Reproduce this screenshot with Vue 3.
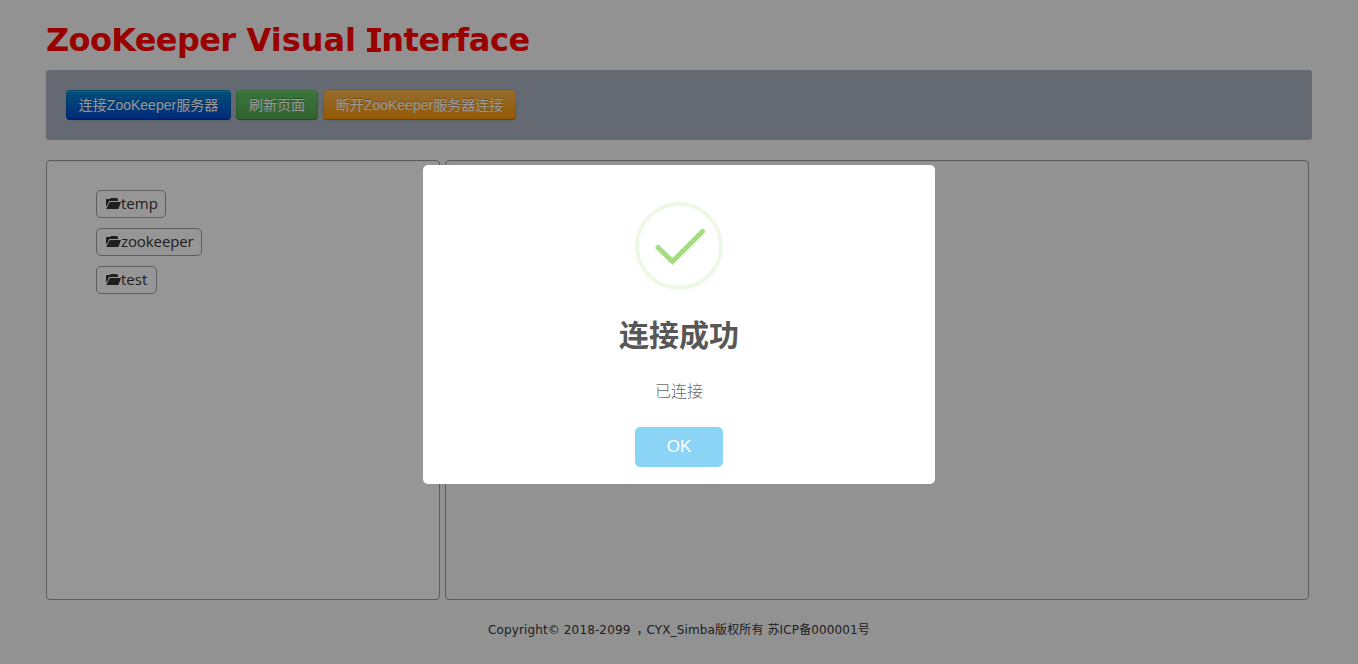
<script setup>
const nodes = ['temp', 'zookeeper', 'test']
</script>

<template>
  <div class="page">
    <h1><span class="brand">ZooKeeper</span> Visual <span class="cap">I</span><span class="rest">nterface</span></h1>
    <div class="toolbar">
      <button class="btn primary">连接ZooKeeper服务器</button>
      <button class="btn success">刷新页面</button>
      <button class="btn warning">断开ZooKeeper服务器连接</button>
    </div>
    <div class="panels">
      <ul class="tree">
        <li v-for="n in nodes" :key="n" :class="n">
          <svg width="16" height="14" viewBox="0 0 16 14">
            <path d="M1 9.5V2.6Q1 2 1.6 2H4.9L5.9 1H11.6L12.4 1.8H13V4H4.2L2.2 8.2Z" />
            <path d="M4.8 5H16L13.4 12H1.2Z" />
          </svg><span>{{ n }}</span>
        </li>
      </ul>
      <div class="detail"></div>
    </div>
    <footer>Copyright© 2018-2099 <span class="comma">，</span>CYX_Simba版权所有 苏ICP备000001号</footer>
  </div>
  <div class="overlay">
    <div class="modal">
      <svg class="ok-icon" width="88" height="88" viewBox="0 0 88 88">
        <circle cx="44" cy="44" r="42" fill="none" stroke="#edf8e7" stroke-width="4" />
        <path d="M23 45.5L37.5 59.5L67.5 29.5" fill="none" stroke="#a5dc86" stroke-width="5" stroke-linecap="round" />
      </svg>
      <h2>连接成功</h2>
      <p>已连接</p>
      <button class="confirm">OK</button>
    </div>
  </div>
</template>

<style>
body { background: #f3f3f3; overflow: hidden; }
</style>

<style scoped>
.page {
  box-sizing: border-box;
  height: 664px;
  padding: 20px 46px 0;
  font-family: "DejaVu Sans", "Noto Sans CJK SC", sans-serif;
  color: #333;
}
h1 {
  margin: 0 0 10px;
  height: 40px;
  font: bold 32px/40px "DejaVu Sans", sans-serif;
  color: #f00;
  white-space: nowrap;
}
.brand { letter-spacing: -.65px; }
.rest { letter-spacing: -.4px; }
.cap {
  position: relative;
  display: inline-block;
  width: 14px;
  text-align: center;
}
.cap::before, .cap::after {
  content: "";
  position: absolute;
  left: 0;
  width: 14px;
  height: 4px;
  background: #f00;
}
.cap::before { top: 8px; }
.cap::after { top: 28px; }
.toolbar {
  box-sizing: border-box;
  height: 70px;
  padding: 20px;
  display: flex;
  gap: 5px;
  background: #a9b1be;
  border-radius: 3px;
}
.btn {
  box-sizing: border-box;
  height: 30px;
  padding: 0;
  border: 1px solid;
  border-color: rgba(0,0,0,.1) rgba(0,0,0,.1) rgba(0,0,0,.25);
  border-radius: 4px;
  font: 14px/20px "Liberation Sans", "Noto Sans CJK SC", sans-serif;
  color: #fff;
  text-shadow: 0 -1px 0 rgba(0,0,0,.25);
  box-shadow: inset 0 1px 0 rgba(255,255,255,.2), 0 1px 2px rgba(0,0,0,.05);
  background-origin: border-box;
  white-space: nowrap;
}
.primary { width: 165px; background-image: linear-gradient(#08c, #04c); }
.success { width: 82px; background-image: linear-gradient(#62c462, #51a351); }
.warning { width: 193px; background-image: linear-gradient(#fbb450, #f89406); }
.panels { display: flex; gap: 5px; margin-top: 20px; height: 440px; }
.tree, .detail {
  box-sizing: border-box;
  border: 1px solid #999;
  border-radius: 4px;
  box-shadow: inset 0 1px 1px rgba(0,0,0,.05);
}
.tree {
  width: 394px;
  margin: 0;
  padding: 29px 0 0 49px;
  list-style: none;
  background: #fbfbfb;
}
.detail { width: 864px; }
.tree li {
  box-sizing: border-box;
  display: flex;
  align-items: center;
  height: 28px;
  margin-bottom: 10px;
  padding: 0 0 2px 8px;
  border: 1px solid #999;
  border-radius: 5px;
  font: 15px/24px "Open Sans", sans-serif;
}
.tree svg { fill: #333; position: relative; top: 1px; }
.tree span { color: #333; }
.temp { width: 70px; }
.zookeeper { width: 106px; letter-spacing: -.1px; }
.test { width: 61px; }
footer {
  margin-top: 20px;
  text-align: center;
  font-size: 12px;
  line-height: 20px;
  letter-spacing: .13px;
  white-space: nowrap;
}
.comma { position: relative; left: 2px; }
.overlay {
  position: fixed;
  inset: 0;
  background: rgba(0,0,0,.4);
}
.modal {
  position: absolute;
  left: 423px;
  top: 165px;
  box-sizing: border-box;
  width: 512px;
  height: 319px;
  padding-top: 37px;
  display: flex;
  flex-direction: column;
  align-items: center;
  background: #fff;
  border-radius: 5px;
  font-family: "Liberation Sans", "Noto Sans CJK SC", sans-serif;
}
.ok-icon { flex: none; }
h2 { margin: 26px 0 0; font-size: 30px; line-height: 40px; font-weight: 700; color: #575757; }
p { margin: 26px 0 0; font-size: 16px; line-height: 20px; font-weight: 300; color: #686868; }
.confirm {
  width: 88px;
  height: 40px;
  margin-top: 25px;
  padding: 0;
  border: 0;
  border-radius: 5px;
  background: #8cd4f5;
  color: #fff;
  font: 17px/38px "Liberation Sans", sans-serif;
}
</style>
